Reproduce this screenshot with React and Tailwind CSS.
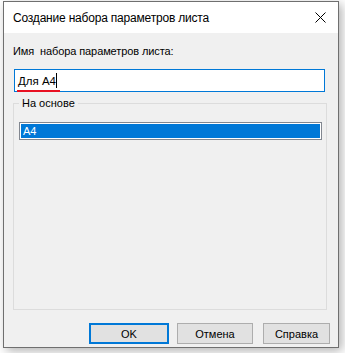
import React from 'react';

const font = { fontFamily: '"Liberation Sans", Arial, sans-serif' };

export default function App() {
  return (
    <div className="w-[345px] h-[353px] bg-white pl-[3px] pt-[1px]" style={font}>
      {/* Dialog window */}
      <div className="w-[336px] h-[347px] flex flex-col border border-[#6f6f6f] bg-[#f0f0f0] shadow-[3px_3px_10px_rgba(0,0,0,0.3)] text-[11px] leading-4 text-black">
        {/* Title bar */}
        <div className="h-[31px] shrink-0 bg-white flex items-center justify-between pl-[9px] pr-[10px] text-[12px] tracking-[-0.2px]">
          <span>Создание набора параметров листа</span>
          <svg width="11" height="11" viewBox="0 0 11 11" className="mr-[2px]">
            <path d="M0.5 0.5 L10.5 10.5 M10.5 0.5 L0.5 10.5" stroke="#000" strokeWidth="1" />
          </svg>
        </div>

        {/* Body */}
        <div className="flex-1 flex flex-col pt-[10px] pl-[9px] pr-[10px]">
          <div className="whitespace-pre tracking-[-0.1px]">Имя  набора параметров листа:</div>

          <div className="mt-[10px] ml-[1px] w-[311px] h-[23px] bg-white border border-[#0078d7] flex items-center pl-[3px] text-[11.5px]">
            <span className="relative">
              Для А4
              <span className="absolute left-[-1px] right-[-4px] bottom-[-3px] h-[2px] bg-[#e81123]" />
            </span>
            <span className="w-px h-[15px] bg-black" />
          </div>

          {/* Group box */}
          <fieldset className="mt-[3px] w-[314px] h-[215px] border border-[#dcdcdc] pl-[5px] pr-[4px] pb-[5px] flex flex-col">
            <legend className="px-[3px]">На основе</legend>
            <div className="mt-[11px] flex-1 bg-white border border-[#828790] p-px">
              <div className="h-[14px] bg-[#0078d7] text-white leading-[14px] pl-[2px]">A4</div>
            </div>
          </fieldset>

          {/* Buttons */}
          <div className="mt-auto mb-[3px] flex justify-end gap-[8px]">
            <button className="w-[80px] h-[21px] bg-[#e1e1e1] border-2 border-[#0078d7] leading-4">OK</button>
            <button className="w-[76px] h-[21px] bg-[#e1e1e1] border border-[#adadad] leading-4">Отмена</button>
            <button className="ml-[2px] w-[67px] h-[21px] bg-[#e1e1e1] border border-[#adadad] leading-4 mr-[-2px]">Справка</button>
          </div>
        </div>
      </div>
    </div>
  );
}
